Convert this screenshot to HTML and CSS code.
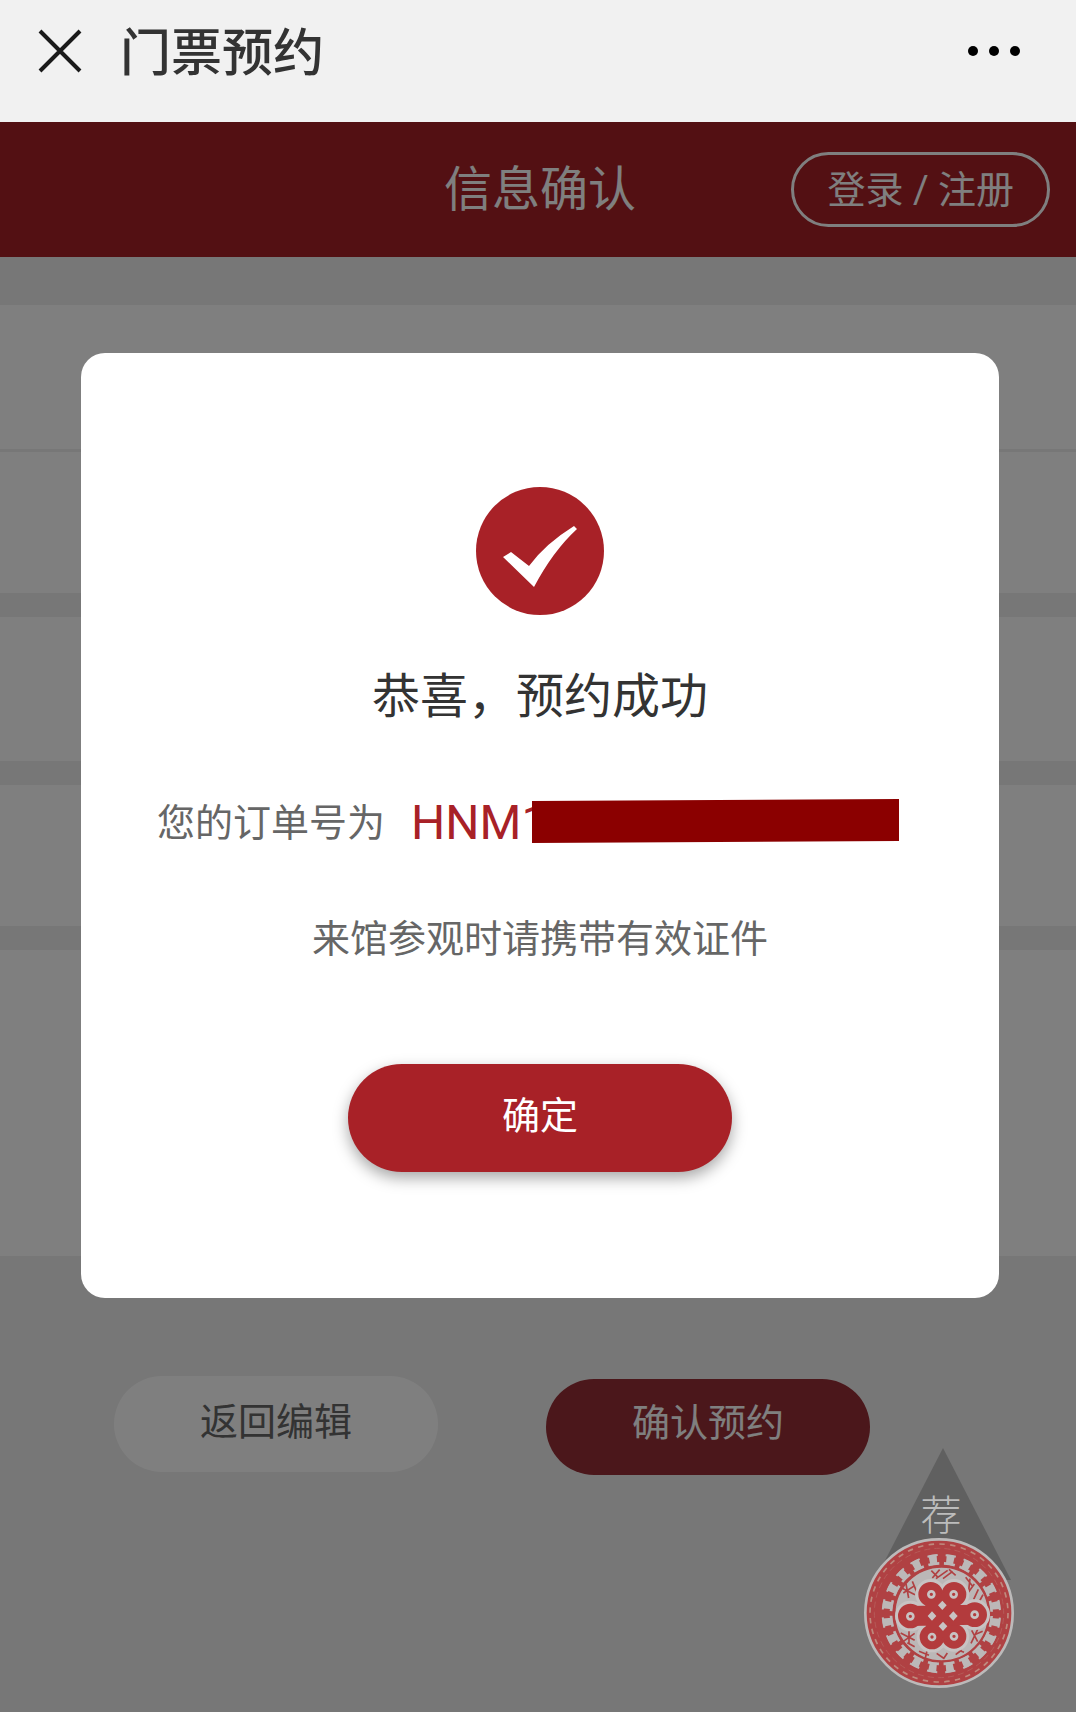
FILE: index.html
```html
<!DOCTYPE html>
<html lang="zh-CN">
<head>
    <meta charset="UTF-8">
    <meta name="viewport" content="width=device-width, initial-scale=1.0">
    <title>门票预约</title>
    <link rel="stylesheet" href="styles.css">
</head>
<body>
    <div class="app-bar">
        <button class="icon-button" aria-label="关闭">
            <svg width="44" height="44" viewBox="0 0 44 44" fill="none">
                <path d="M2 2L42 42M42 2L2 42" stroke="#1a1a1a" stroke-width="4"/>
            </svg>
        </button>
        <h1>门票预约</h1>
        <button class="icon-button" aria-label="更多">
            <svg width="52" height="10" viewBox="0 0 52 10">
                <circle cx="5" cy="5" r="5"/>
                <circle cx="26" cy="5" r="5"/>
                <circle cx="47" cy="5" r="5"/>
            </svg>
        </button>
    </div>

    <main class="page">
        <header class="header">
            <h2>信息确认</h2>
            <a href="#" class="login">登录 / 注册</a>
        </header>

        <section class="rows">
            <div class="row lined"></div>
            <div class="row short"></div>
        </section>
        <section class="row"></section>
        <section class="row short"></section>
        <section class="row visitors"></section>

        <div class="actions">
            <button class="back">返回编辑</button>
            <button class="confirm">确认预约</button>
        </div>

        <div class="overlay">
            <div class="modal" role="dialog" aria-labelledby="modal-title">
                <svg class="check" width="130" height="130" viewBox="0 0 130 130">
                    <circle cx="65" cy="65" r="64" fill="#a82127"/>
                    <path d="M28 71L36 66L54 80Q70 58 99 40L102 43Q78 65 59 101Z" fill="#fff"/>
                </svg>
                <h3 id="modal-title">恭喜，预约成功</h3>
                <p class="order">
                    <span>您的订单号为</span>
                    <span class="order-number">HNM1
                        <svg class="mask" width="367" height="46" viewBox="0 0 367 46">
                            <path d="M0 3L367 1V43L0 45Z" fill="#8b0000"/>
                        </svg>
                    </span>
                </p>
                <p class="note">来馆参观时请携带有效证件</p>
                <button class="ok">确定</button>
            </div>
        </div>

        <a href="#" class="recommend">
            <svg class="pointer" width="136" height="132" viewBox="0 0 136 132">
                <path d="M68 0L136 132H0Z" fill="#606060"/>
            </svg>
            <span>荐</span>
            <svg class="emblem" width="150" height="150" viewBox="0 0 450 450" fill="none">
                <circle cx="225" cy="225" r="221" fill="#b04143" stroke="#bcbaba" stroke-width="8"/>
                <!-- scalloped border -->
                <g stroke="#bf8a7e" stroke-width="5">
                    <circle cx="225" cy="225" r="207" pathLength="40" stroke-dasharray=".5 .5"/>
                    <circle cx="225" cy="225" r="194" stroke="#b65a58" stroke-width="3" pathLength="40" stroke-dasharray=".6 .4" stroke-dashoffset=".5"/>
                </g>
                <!-- lattice ring -->
                <g stroke="#bcb8b8">
                    <circle cx="232" cy="227" r="163" stroke-width="30" pathLength="20" stroke-dasharray=".44 .56" stroke-dashoffset=".72"/>
                    <circle cx="232" cy="227" r="151" stroke-width="8" pathLength="20" stroke-dasharray=".7 .3" stroke-dashoffset=".85"/>
                    <circle cx="232" cy="227" r="176" stroke-width="6" pathLength="20" stroke-dasharray=".56 .44" stroke-dashoffset=".78"/>
                </g>
                <circle cx="233" cy="228" r="141" fill="#bbb7b7" stroke="#b04143" stroke-width="5"/>
                <!-- leaves behind the knot -->
                <g stroke="#b04143" stroke-width="5">
                    <path d="M113 150l40 20M118 165l34-22M126 138l8 42M145 130l15 36M205 120l22-25M216 122l35-25M237 122l29-22M202 98l20 20M275 112l-20-18"/>
                    <path d="M305 118l22 28M318 122l-4 36M331 138l-20 28M343 154l-14 30M357 170l-12 22M110 285l42 22M118 310l34-24M135 275v44M152 326l-22-12"/>
                    <path d="M323 277l18 34M341 274l-20 42M356 280l-28 12M165 340l30 12M190 334l-6 26M218 346l20 14M250 345l-12 18M275 350l18-14M300 343l-20-8"/>
                </g>
                <!-- knot -->
                <g stroke="#c8c3c3" stroke-linecap="round">
                    <path d="M200 169V169.1M270 169V169.1M139 234V234.1M332 230V230.1M204 297V297.1M270 295V295.1" stroke-width="92"/>
                    <path d="M200 169L271 295M270 169L203 297M139 234L332 230" stroke-width="76"/>
                </g>
                <g stroke="#b33b3d" stroke-linecap="round">
                    <path d="M200 169V169.1M270 169V169.1M139 234V234.1M332 230V230.1M204 297V297.1M270 295V295.1" stroke-width="74"/>
                    <path d="M200 169L271 295M270 169L203 297M139 234L332 230" stroke-width="60"/>
                </g>
                <path d="M235 188l13 14-13 14-13-14zM204 220l13 14-13 14-13-14zM268 220l13 14-13 14-13-14zM237 251l13 14-13 14-13-14z" fill="#c8c3c3"/>
                <g fill="#b33b3d" stroke="#c8c3c3" stroke-width="8">
                    <circle cx="202" cy="169" r="9"/>
                    <circle cx="269" cy="169" r="9"/>
                    <circle cx="139" cy="235" r="9"/>
                    <circle cx="332" cy="230" r="9"/>
                    <circle cx="204" cy="297" r="9"/>
                    <circle cx="270" cy="295" r="9"/>
                </g>
            </svg>
        </a>
    </main>
</body>
</html>
```
FILE: styles.css
```css
:root {
    --red: #a82127;
    --header: #a62026;
    --bg: #efefef;
    --text: #333333;
    --muted: #666666;
}

* {
    box-sizing: border-box;
    margin: 0;
    padding: 0;
}

body {
    display: flex;
    flex-direction: column;
    min-height: 100vh;
    font-family: Roboto, "Noto Sans CJK SC", sans-serif;
    font-size: 38px;
    line-height: 56px;
    color: var(--text);
    background-color: var(--bg);
}

h1,
h2,
h3 {
    font-size: 48px;
    font-weight: 400;
}

button {
    border: none;
    font: inherit;
    color: inherit;
    cursor: pointer;
}

a {
    color: inherit;
    text-decoration: none;
}

.app-bar {
    display: flex;
    align-items: center;
    gap: 38px;
    height: 122px;
    padding: 0 56px 20px 38px;
    background-color: #f1f1f1;
}

.app-bar h1 {
    flex: 1;
    padding-top: 6px;
    font-size: 51px;
    font-weight: 500;
}

.icon-button {
    display: flex;
    background: none;
}

.page {
    position: relative;
    flex: 1;
}

.header {
    display: grid;
    grid-template-columns: 1fr auto 1fr;
    align-items: center;
    height: 135px;
    padding: 0 26px 0 30px;
    color: #fff;
    background-color: var(--header);
    margin-bottom: 48px;
}

.header h2 {
    grid-column: 2;
}

.login {
    justify-self: end;
    padding: 7px 33px 6px;
    border: 3px solid #fff;
    border-radius: 38px;
}

.row {
    height: 144px;
    margin-bottom: 24px;
    background-color: #fff;
}

.row.lined {
    height: 147px;
    margin-bottom: 0;
    border-bottom: 3px solid var(--bg);
}

.row.short {
    height: 141px;
}

.row.visitors {
    height: 306px;
    margin-bottom: 120px;
}

.actions {
    display: flex;
    gap: 108px;
    padding: 0 114px;
}

.actions button {
    width: 324px;
    height: 96px;
    padding-bottom: 4px;
    border-radius: 48px;
}

.actions .back {
    color: var(--muted);
    background-color: #fff;
}

.actions .confirm {
    margin-top: 3px;
    padding-bottom: 8px;
    color: #fff;
    background-color: #962e36;
}

.overlay {
    position: absolute;
    inset: 0;
    padding: 231px 77px 0 81px;
    background-color: rgba(0, 0, 0, 0.5);
}

.modal {
    display: flex;
    flex-direction: column;
    align-items: center;
    padding: 133px 76px 126px;
    border-radius: 24px;
    background-color: #fff;
}

.modal h3 {
    margin: 53px 0 70px;
}

.order {
    display: flex;
    align-items: center;
    align-self: stretch;
    gap: 26px;
    margin-bottom: 60px;
    color: var(--muted);
}

.order-number {
    position: relative;
    flex: 1;
    font-size: 48px;
    line-height: 54px;
    color: var(--red);
}

.mask {
    position: absolute;
    left: 121px;
    top: 2px;
}

.note {
    margin-bottom: 97px;
    color: var(--muted);
}

.ok {
    width: 384px;
    height: 108px;
    padding-bottom: 4px;
    border-radius: 54px;
    color: #fff;
    background-color: var(--red);
    box-shadow: 0 6px 15px rgba(0, 0, 0, 0.35);
}

.recommend {
    position: absolute;
    right: 62px;
    bottom: 24px;
    display: flex;
    flex-direction: column;
    align-items: center;
    width: 150px;
    padding-top: 46px;
    font-size: 41px;
    font-weight: 300;
    line-height: 44px;
    color: #bcbcbc;
}

.pointer {
    position: absolute;
    top: 0;
    right: 3px;
}

.recommend span,
.emblem {
    position: relative;
}

.recommend span {
    padding-left: 4px;
}
```
